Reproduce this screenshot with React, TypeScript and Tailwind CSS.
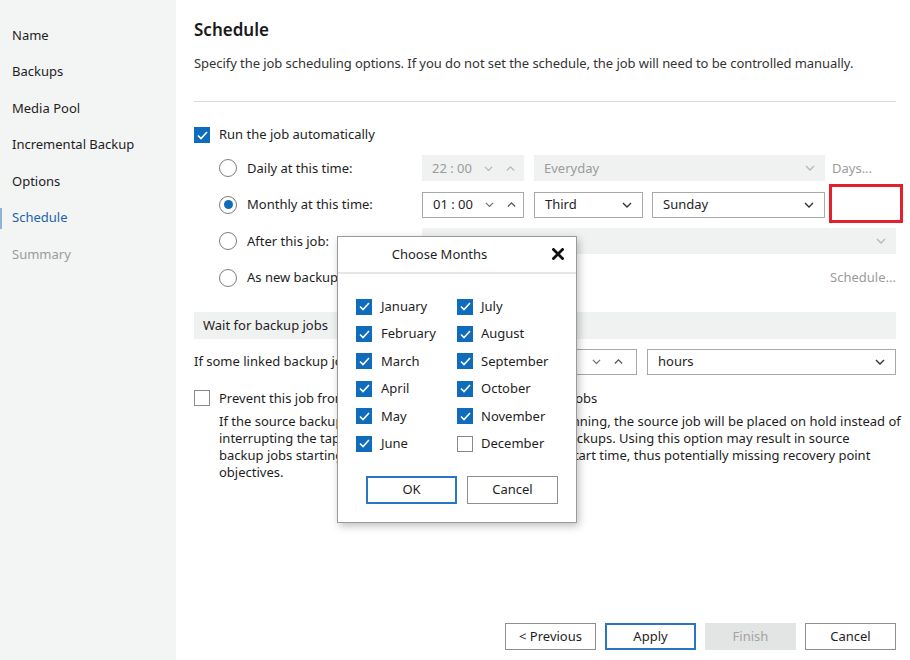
import React from "react";

const Down = ({ c = "#333", w = 10 }: { c?: string; w?: number }) => (
  <svg width={w} height={w * 0.6} viewBox="0 0 10 6" fill="none">
    <path d="M1 1l4 4 4-4" stroke={c} strokeWidth="1.4" />
  </svg>
);
const Up = ({ c = "#333", w = 10 }: { c?: string; w?: number }) => (
  <svg width={w} height={w * 0.6} viewBox="0 0 10 6" fill="none">
    <path d="M1 5l4-4 4 4" stroke={c} strokeWidth="1.4" />
  </svg>
);

const Check = ({ on }: { on: boolean }) =>
  on ? (
    <div className="w-[16px] h-[16px] bg-[#0f6cbd] flex items-center justify-center shrink-0">
      <svg width="11" height="9" viewBox="0 0 11 9" fill="none">
        <path d="M1 4.5l3 3 6-6.5" stroke="white" strokeWidth="1.6" />
      </svg>
    </div>
  ) : (
    <div className="w-[16px] h-[16px] border border-[#8a8a8a] bg-white shrink-0" />
  );

const Radio = ({ on }: { on?: boolean }) => (
  <div className="w-[18px] h-[18px] rounded-full border border-[#7d7d7d] bg-white flex items-center justify-center shrink-0">
    {on && <div className="w-[9px] h-[9px] rounded-full bg-[#0f6cbd]" />}
  </div>
);

const Spinner = ({ value, disabled }: { value: string; disabled?: boolean }) => (
  <div
    className={
      "w-[102px] h-[26px] flex items-center pl-[10px] shrink-0 " +
      (disabled ? "bg-[#f0f1f1] text-[#9b9b9b]" : "bg-white border border-[#a9a9a9]")
    }
  >
    <span className="w-[46px]">{value}</span>
    <span className="w-[20px] flex justify-center">
      <Down c={disabled ? "#b8b8b8" : "#777"} w={9} />
    </span>
    <span className="w-[24px] flex justify-center">
      <Up c={disabled ? "#b8b8b8" : "#555"} w={9} />
    </span>
  </div>
);

const Combo = ({ value, w, disabled }: { value: string; w: string; disabled?: boolean }) => (
  <div
    className={
      w +
      " h-[26px] flex items-center justify-between pl-[10px] pr-[10px] shrink-0 " +
      (disabled ? "bg-[#f0f1f1] text-[#9b9b9b]" : "bg-white border border-[#a9a9a9]")
    }
  >
    <span>{value}</span>
    <Down c={disabled ? "#b8b8b8" : "#333"} w={10} />
  </div>
);

const Btn = ({ label, primary, disabled }: { label: string; primary?: boolean; disabled?: boolean }) => (
  <div
    className={
      "w-[91px] h-[27px] flex items-center justify-center " +
      (disabled
        ? "bg-[#e3e4e4] text-[#a3a3a3] border border-[#e3e4e4]"
        : primary
        ? "bg-white border-2 border-[#2a75c4]"
        : "bg-white border border-[#8e8e8e]")
    }
  >
    {label}
  </div>
);

const nav = ["Name", "Backups", "Media Pool", "Incremental Backup", "Options", "Schedule", "Summary"];

const months1 = ["January", "February", "March", "April", "May", "June"];
const months2 = ["July", "August", "September", "October", "November", "December"];

export default function App() {
  return (
    <div
      className="w-[910px] h-[660px] flex bg-white text-[#1e1e1e] text-[13px] overflow-hidden relative"
      style={{ fontFamily: '"Noto Sans", "Open Sans", sans-serif' }}
    >
      {/* Sidebar */}
      <div className="w-[176px] h-full bg-[#f3f4f4] pt-[17px] flex flex-col shrink-0">
        {nav.map((n) => (
          <div key={n} className="h-[36.5px] flex items-center relative pl-[12px]">
            {n === "Schedule" && <div className="absolute left-0 top-[8px] w-[2px] h-[21px] bg-[#8db3dc]" />}
            <span
              className={
                n === "Schedule" ? "text-[#1a64ab]" : n === "Summary" ? "text-[#9b9b9b]" : "text-[#1e1e1e]"
              }
            >
              {n}
            </span>
          </div>
        ))}
      </div>

      {/* Main */}
      <div className="flex-1 min-w-0 flex flex-col pl-[18px] pr-[14px]">
        <div className="pt-[18px] text-[17px] font-semibold leading-[24px] text-[#1a1a1a]">Schedule</div>
        <div className="mt-[12px] leading-[18px] text-[#333] whitespace-nowrap tracking-[-0.06px]">
          Specify the job scheduling options. If you do not set the schedule, the job will need to be controlled manually.
        </div>
        <div className="mt-[29px] h-px bg-[#d9d9d9]" />

        {/* Run automatically */}
        <div className="mt-[24px] h-[18px] flex items-center gap-[9px]">
          <Check on />
          <span>Run the job automatically</span>
        </div>

        <div className="mt-[6px] pl-[25px] flex flex-col">
          {/* Daily */}
          <div className="h-[36.5px] flex items-center">
            <div className="w-[203px] flex items-center gap-[10px] shrink-0">
              <Radio />
              <span>Daily at this time:</span>
            </div>
            <Spinner value="22 : 00" disabled />
            <div className="ml-[10px]">
              <Combo value="Everyday" w="w-[291px]" disabled />
            </div>
            <span className="ml-[7px] text-[#9b9b9b]">Days...</span>
          </div>
          {/* Monthly */}
          <div className="h-[36.5px] flex items-center">
            <div className="w-[203px] flex items-center gap-[10px] shrink-0">
              <Radio on />
              <span>Monthly at this time:</span>
            </div>
            <Spinner value="01 : 00" />
            <div className="ml-[10px]">
              <Combo value="Third" w="w-[109px]" />
            </div>
            <div className="ml-[9px]">
              <Combo value="Sunday" w="w-[173px]" />
            </div>
          </div>
          {/* After this job */}
          <div className="h-[36.5px] flex items-center">
            <div className="w-[203px] flex items-center gap-[10px] shrink-0">
              <Radio />
              <span>After this job:</span>
            </div>
            <div className="flex-1 h-[26px] bg-[#f0f1f1] flex items-center justify-end pr-[10px]">
              <Down c="#b8b8b8" w={10} />
            </div>
          </div>
          {/* As new backup */}
          <div className="h-[36.5px] flex items-center">
            <div className="w-[203px] flex items-center gap-[10px] shrink-0">
              <Radio />
              <span>As new backup file appears</span>
            </div>
            <span className="ml-auto text-[#9b9b9b]">Schedule...</span>
          </div>
        </div>

        {/* Wait for backup jobs */}
        <div className="mt-[16px] h-[27px] bg-[#f0f1f1] flex items-center pl-[9px]">Wait for backup jobs</div>

        <div className="mt-[10px] h-[26px] flex items-center">
          <span className="whitespace-nowrap">If some linked backup jobs are running, wait up to:</span>
          <div className="ml-auto flex items-center gap-[10px]">
            <div className="w-[102px] h-[26px] bg-white border border-[#a9a9a9] flex items-center justify-end pr-[6px]">
              <span className="w-[20px] flex justify-center">
                <Down c="#777" w={9} />
              </span>
              <span className="w-[24px] flex justify-center">
                <Up c="#555" w={9} />
              </span>
            </div>
            <Combo value="hours" w="w-[249px]" />
          </div>
        </div>

        <div className="mt-[14px] flex gap-[9px]">
          <div className="mt-[1px]">
            <Check on={false} />
          </div>
          <div className="flex flex-col whitespace-nowrap">
            <span className="leading-[18px]">Prevent this job from being interrupted by source backup jobs</span>
            <div className="mt-[6px] leading-[17px]">
              <div>If the source backup job starts when the tape job is still running, the source job will be placed on hold instead of</div>
              <div>interrupting the tape job until it finishes copying source backups. Using this option may result in source</div>
              <div>backup jobs starting later than their originally scheduled start time, thus potentially missing recovery point</div>
              <div>objectives.</div>
            </div>
          </div>
        </div>

        {/* Footer */}
        <div className="mt-auto mb-[10px] flex justify-end gap-[9px]">
          <Btn label="< Previous" />
          <Btn label="Apply" primary />
          <Btn label="Finish" disabled />
          <Btn label="Cancel" />
        </div>
      </div>

      {/* Red highlight annotation */}
      <div className="absolute left-[829px] top-[184px] w-[74px] h-[39px] border-[3px] border-[#e4202a]" />

      {/* Dialog */}
      <div className="absolute left-[337px] top-[236px] w-[240px] h-[287px] bg-white border border-[#9a9a9a] shadow-[2px_3px_8px_rgba(0,0,0,0.25)] flex flex-col">
        <div className="h-[37px] flex items-center relative border-b-2 border-[#e6e6e6]">
          <span className="w-[203px] text-center">Choose Months</span>
          <svg className="absolute left-[214px] top-[11px]" width="12" height="12" viewBox="0 0 12 12">
            <path d="M1.5 1.5l9 9M10.5 1.5l-9 9" stroke="#111" strokeWidth="2.8" strokeLinecap="square" />
          </svg>
        </div>
        <div className="pt-[19px] pl-[18px] flex">
          <div className="w-[101px] flex flex-col">
            {months1.map((m) => (
              <div key={m} className="h-[27.4px] flex items-center gap-[9px]">
                <Check on />
                <span>{m}</span>
              </div>
            ))}
          </div>
          <div className="flex flex-col">
            {months2.map((m) => (
              <div key={m} className="h-[27.4px] flex items-center gap-[8px]">
                <Check on={m !== "December"} />
                <span>{m}</span>
              </div>
            ))}
          </div>
        </div>
        <div className="mt-auto mb-[18px] pl-[28px] flex gap-[10px]">
          <div className="w-[91px] h-[28px] border-2 border-[#2a75c4] flex items-center justify-center">OK</div>
          <div className="w-[91px] h-[28px] border border-[#8e8e8e] flex items-center justify-center">Cancel</div>
        </div>
      </div>
    </div>
  );
}
